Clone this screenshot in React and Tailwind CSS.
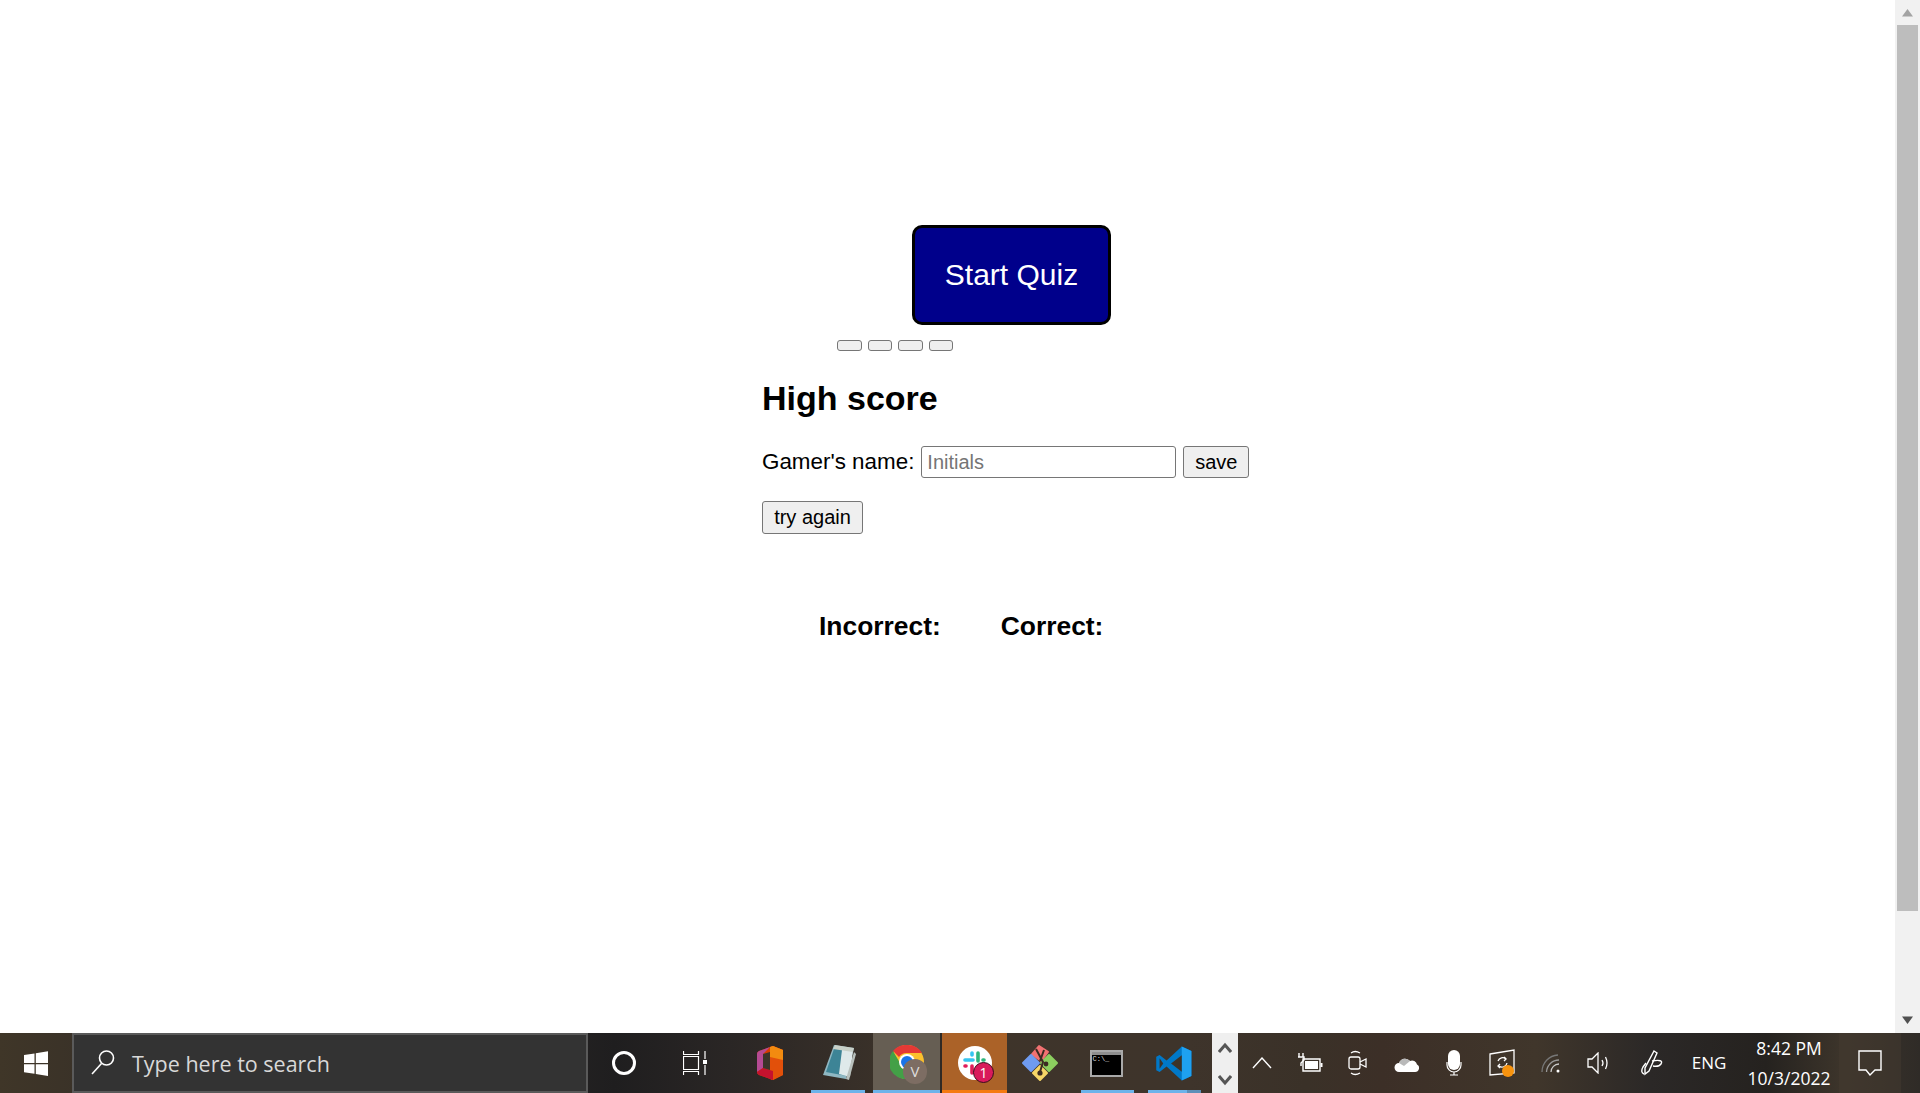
const Arrow = ({ up, c }) => (
  <svg width="25" height="25" viewBox="0 0 25 25" className="shrink-0">
    <path d={up ? "M7 16.5 12.5 9 18 16.5Z" : "M7 8.5 12.5 16 18 8.5Z"} fill={c} />
  </svg>
);

const Slot = ({ w, children, className = "" }) => (
  <div className={`relative flex h-full shrink-0 items-center justify-center ${className}`} style={{ width: w }}>
    {children}
  </div>
);

const Under = ({ color, cls }) => <div className={`absolute bottom-0 h-[3px] ${cls}`} style={{ background: color }} />;

const Win = () => (
  <svg width="24" height="25" viewBox="0 0 24 25" fill="#fff">
    <path d="M0 4 10.5 2.4V12H0ZM11.8 2.2 24 .3V12H11.8ZM0 13.2H10.5V22.8L0 21.2ZM11.8 13.2H24V25L11.8 23Z" />
  </svg>
);

const Office = () => (
  <svg width="28" height="34" viewBox="0 0 28 34">
    <path d="M1 8Q1 6 3 5L17 0 27 4V29L17 34 3 29Q1 28 1 26Z" fill="#d83b01" />
    <path d="M14 1 17 0 27 4V29L17 34 14 33Z" fill="#e2500a" />
    <path d="M14 1 17 0 27 4V14L14 11Z" fill="#f28b10" />
    <path d="M1 8Q1 6 3 5L14 1 7 8V22L1 26Z" fill="#b54a93" />
    <path d="M1 26 7 22 17 25V34L3 29Q1 28 1 26Z" fill="#c4122e" />
    <path d="M7 8 14 6V24L7 22Z" fill="#3d342a" />
  </svg>
);

const Notepad = () => (
  <svg width="34" height="38" viewBox="0 0 34 38">
    <path d="M12 1 32 4 24 35 1 31Z" fill="#8fb7c2" />
    <path d="M13 2 30 5 25 32 4 28Z" fill="#3d8496" />
    <path d="M20 6 31 6 28 33 17 30Z" fill="#dfe9ea" />
    <path d="M13 1 32 4 31 8 11 5Z" fill="#c8d0c8" />
    <path d="M32 8 34 10 27 36 24 35Z" fill="#b8c0bc" />
  </svg>
);

const Chrome = () => (
  <svg width="34" height="34" viewBox="2 2 34 34" className="-mt-[2px]">
    <circle cx="19" cy="19" r="17" fill="#fbc02d" />
    <path d="M19 2A17 17 0 0 1 34 10H19A9 9 0 0 0 11 14L5 8A17 17 0 0 1 19 2Z" fill="#e53935" />
    <path d="M5 8 12 20 20 36A17 17 0 0 1 5 8Z" fill="#43a047" />
    <circle cx="19" cy="19" r="8" fill="#fff" />
    <circle cx="19" cy="19" r="6" fill="#1a73e8" />
  </svg>
);

const Slack = () => (
  <svg width="34" height="34" viewBox="0 0 34 34">
    <circle cx="17" cy="17" r="17" fill="#fff" />
    <path d="M7 14H15" stroke="#36c5f0" strokeWidth="3.6" strokeLinecap="round" />
    <path d="M14 7V9" stroke="#36c5f0" strokeWidth="3.6" strokeLinecap="round" />
    <path d="M20 7V15" stroke="#2eb67d" strokeWidth="3.6" strokeLinecap="round" />
    <path d="M26 14H25" stroke="#2eb67d" strokeWidth="3.6" strokeLinecap="round" />
    <path d="M14 20V27" stroke="#e01e5a" strokeWidth="3.6" strokeLinecap="round" />
    <path d="M7 20H8" stroke="#e01e5a" strokeWidth="3.6" strokeLinecap="round" />
  </svg>
);

const GitIcon = () => (
  <svg width="38" height="38" viewBox="0 0 38 38" strokeLinejoin="round">
    <path d="M19 2 27 9 19 17 11 9Z" fill="#f27272" stroke="#f27272" strokeWidth="2" transform="rotate(-8 19 9)" />
    <path d="M10 11 18 19 10 27 2 19Z" fill="#6f9bf0" stroke="#6f9bf0" strokeWidth="2" />
    <path d="M28 11 36 19 28 27 20 19Z" fill="#8ccf5f" stroke="#8ccf5f" strokeWidth="2" />
    <path d="M19 22 26 29 19 36 12 29Z" fill="#f6d667" stroke="#f6d667" strokeWidth="2" />
    <path d="M15 5 22 18 19 28M23 6 19 17" stroke="#3b2b22" strokeWidth="2" fill="none" />
    <circle cx="19" cy="29" r="2.6" fill="#3b2b22" />
    <circle cx="25" cy="20" r="2.4" fill="#3b2b22" />
  </svg>
);

const Cmd = () => (
  <div className="h-[27px] w-[33px] border-2 border-[#a9a9a9] bg-black">
    <div className="h-[3px] bg-[#8e8e8e]" />
    <div className="pl-[1px] font-['Liberation_Mono',monospace] text-[7px] leading-[8px] text-[#ddd]">C:\_</div>
  </div>
);

const VSCode = () => (
  <svg width="38" height="37" viewBox="0 0 100 100">
    <path d="M71 4 97 16V84L71 96 30 58 11 73 2 68V32L11 27 30 42Z" fill="#0078c8" />
    <path d="M71 4 97 16V84L71 96Z" fill="#1ea1f1" />
    <path d="M71 28 42 50 71 72Z" fill="#3d3329" />
    <path d="M11 36 21 50 11 64Z" fill="#3d3329" />
  </svg>
);

const TrayIcon = ({ children, w }) => <Slot w={w}>{children}</Slot>;

export default function App() {
  const stroke = { stroke: "#fff", fill: "none", strokeWidth: 1.4 };
  return (
    <div className="flex h-[1093px] w-[1920px] flex-col overflow-hidden bg-white font-['Liberation_Sans',Arial,sans-serif] text-black">
      <div className="flex h-[1033px] shrink-0">
        <main className="w-[1895px] shrink-0">
          <div className="ml-[762px] w-[500px] pt-[225px]">
            <button className="ml-[150px] block h-[100px] w-[199px] rounded-[10px] border-[3px] border-black bg-[#00008b] pb-[2px] text-[30px] text-white">
              Start Quiz
            </button>
            <div className="ml-[75px] mt-[15px] flex gap-[6px]">
              {[0, 1, 2, 3].map((i) => (
                <button key={i} className="h-[11px] w-[24.5px] rounded-[3px] border border-[#767676] bg-[#efefef]" />
              ))}
            </div>
            <h2 className="mt-[29px] text-[34px] font-bold leading-[37px]">High score</h2>
            <div className="mt-[29px] flex h-[32px] items-center text-[22.4px]">
              <label className="-mt-[1px]">Gamer's name:</label>
              <input
                placeholder="Initials"
                className="ml-[7px] h-[32px] w-[255px] rounded-[3px] border border-[#767676] bg-white px-[5px] text-[20px] placeholder:text-[#757575]"
              />
              <button className="ml-[7px] h-[32px] w-[66px] rounded-[3px] border border-[#767676] bg-[#efefef] text-[20px]">save</button>
            </div>
            <button className="mt-[23px] block h-[33px] w-[101px] rounded-[3px] border border-[#767676] bg-[#efefef] pb-[2px] text-[20px]">try again</button>
            <div className="ml-[57px] mt-[77px] flex gap-[60px] text-[26.4px] font-bold leading-[30px]">
              <span>Incorrect:</span>
              <span>Correct:</span>
            </div>
          </div>
        </main>
        <aside className="flex w-[25px] shrink-0 flex-col items-center bg-[#f1f1f1]">
          <Arrow up c="#a3a3a3" />
          <div className="h-[886px] w-[21px] bg-[#bdbdbd]" />
          <div className="flex-1" />
          <Arrow c="#505050" />
        </aside>
      </div>

      <footer className="flex h-[60px] shrink-0 bg-[linear-gradient(90deg,#3f3628_0%,#3a3228_4%,#2a2726_25%,#1f1e1f_32%,#2a2625_38%,#3e342a_48%,#3e342b_62%,#3a3128_68%,#3c2f27_72%,#40362b_80%,#2b2827_86%,#25221f_92%,#3d352b_96%,#2f2b27_100%)] text-white">
        <Slot w={72}><Win /></Slot>
        <div className="flex h-full w-[516px] shrink-0 items-center border-2 border-[#5a5a5a] bg-[#333333] pl-[16px]">
          <svg width="28" height="28" viewBox="0 0 28 28" fill="none" stroke="#fff" strokeWidth="1.6" className="-mt-[2px]">
            <circle cx="16.5" cy="10" r="7" />
            <path d="M11.5 15.5 2 26" />
          </svg>
          <span className="ml-[14px] mt-[3px] font-['Open_Sans',sans-serif] text-[21.5px] text-[#d8d8d8]">Type here to search</span>
        </div>
        <Slot w={72}>
          <div className="h-[24px] w-[24px] rounded-full border-[3.5px] border-white" />
        </Slot>
        <Slot w={70}>
          <svg width="24" height="24" viewBox="0 0 24 24" fill="none" stroke="#fff" strokeWidth="1.2">
            <path d="M0.5 0V3.5H15.5V0M0.5 5.5H15.5V18.5H0.5ZM0.5 24V20.5H15.5V24" />
            <path d="M22 0V8M22 14V24" />
            <rect x="20" y="9" width="4" height="4" fill="#fff" stroke="none" />
          </svg>
        </Slot>
        <Slot w={5} />
        <Slot w={69}><Office /></Slot>
        <Slot w={69}><Notepad /><Under color="#6db3ea" cls="left-[7px] w-[54px]" /></Slot>
        <Slot w={67} className="bg-[#665e53]">
          <Chrome />
          <div className="absolute left-[30px] top-[26px] flex h-[25px] w-[24px] items-center justify-center rounded-full bg-[#7d6d63] font-['Open_Sans',sans-serif] text-[15px] text-[#ddd]">V</div>
          <Under color="#6db3ea" cls="left-0 w-full" />
        </Slot>
        <Slot w={67} className="border-l-2 border-[#2f2a25] bg-[#ab6228]">
          <Slack />
          <div className="absolute left-[31px] top-[29px] flex h-[21px] w-[21px] items-center justify-center rounded-full border border-[#3a0a1c] bg-[#d91a5b] font-['Open_Sans',sans-serif] text-[14px] text-white">1</div>
          <Under color="#f57a12" cls="left-0 w-full" />
        </Slot>
        <Slot w={66}><GitIcon /></Slot>
        <Slot w={66}><Cmd /><Under color="#6db3ea" cls="left-[8px] w-[53px]" /></Slot>
        <Slot w={2} />
        <Slot w={66}>
          <VSCode />
          <Under color="#6db3ea" cls="left-[7px] w-[39px]" />
          <Under color="#5d8fb8" cls="left-[46px] w-[14px]" />
        </Slot>
        <Slot w={5} />
        <div className="flex h-full w-[26px] shrink-0 flex-col items-center justify-between bg-[#efefef] pb-[7px] pt-[9px]">
          <svg width="14" height="12" viewBox="0 0 14 12" fill="none" stroke="#555" strokeWidth="3"><path d="M1 10 7 3 13 10" /></svg>
          <svg width="14" height="12" viewBox="0 0 14 12" fill="none" stroke="#555" strokeWidth="3"><path d="M1 2 7 9 13 2" /></svg>
        </div>
        <Slot w={48}>
          <svg width="20" height="12" viewBox="0 0 20 12" {...stroke}><path d="M1 11 10 1 19 11" /></svg>
        </Slot>
        <TrayIcon w={48}>
          <svg width="26" height="22" viewBox="0 0 26 22" fill="none" stroke="#fff" strokeWidth="1.4">
            <path d="M2 1V5M6 1V5M1 5H7V8L4 11V14" />
            <path d="M6 7H23V19H6Z" />
            <rect x="8" y="9" width="13" height="8" fill="#fff" stroke="none" />
            <rect x="23.5" y="11" width="2" height="4" fill="#fff" stroke="none" />
          </svg>
        </TrayIcon>
        <TrayIcon w={48}>
          <svg width="20" height="28" viewBox="0 0 20 28" fill="none" stroke="#fff" strokeWidth="1.3">
            <rect x="1" y="8" width="11" height="12" rx="2" />
            <path d="M12 13 18 10V18L12 15" />
            <path d="M3 4Q7 1 12 4M3 24Q7 27 12 24" />
          </svg>
        </TrayIcon>
        <TrayIcon w={48}>
          <svg width="26" height="20" viewBox="0 0 26 20">
            <path d="M6 19H22A4 4 0 0 0 24 11.5 5 5 0 0 0 17 8 6.5 6.5 0 0 0 6 10 4.5 4.5 0 0 0 6 19Z" fill="#fff" />
            <path d="M6 10A6.5 6.5 0 0 1 17 8L11 13Z" fill="#b9b9b9" />
          </svg>
        </TrayIcon>
        <TrayIcon w={47}>
          <svg width="16" height="26" viewBox="0 0 16 26" fill="none">
            <rect x="2" y="0" width="12" height="20" rx="6" fill="#fff" />
            <path d="M1 12V15A7 7 0 0 0 15 15V12M8 22V25M4 25H12" stroke="#fff" strokeWidth="1.2" />
          </svg>
        </TrayIcon>
        <TrayIcon w={49}>
          <div className="relative">
            <svg width="26" height="28" viewBox="0 0 26 28" fill="none" stroke="#fff" strokeWidth="1.3">
              <path d="M1 5 25 1V24L1 26Z" />
              <path d="M9 12A5 5 0 0 1 17 10M18 14A5 5 0 0 1 10 17" />
              <path d="M15 8 17 10 15 12M11 15 9 17 11 19" />
            </svg>
            <div className="absolute left-[13px] top-[16px] h-[12px] w-[12px] rounded-full bg-[#f7930e]" />
          </div>
        </TrayIcon>
        <TrayIcon w={49}>
          <svg width="20" height="20" viewBox="0 0 20 20" fill="none" strokeWidth="1.3">
            <path d="M1 19A17 17 0 0 1 17 2" stroke="#777" />
            <path d="M5.5 19A12.5 12.5 0 0 1 18 7" stroke="#999" />
            <path d="M10 19A8 8 0 0 1 18 11" stroke="#ccc" />
            <circle cx="17" cy="18" r="1.5" fill="#fff" />
          </svg>
        </TrayIcon>
        <TrayIcon w={47}>
          <svg width="24" height="22" viewBox="0 0 24 22" fill="none" stroke="#fff" strokeWidth="1.3">
            <path d="M1 7H5L11 1V21L5 15H1Z" />
            <path d="M15 8Q17 11 15 14M18.5 5Q21.5 11 18.5 17" />
          </svg>
        </TrayIcon>
        <Slot w={3} />
        <TrayIcon w={54}>
          <svg width="24" height="26" viewBox="0 0 24 26" fill="none" stroke="#fff" strokeWidth="1.4">
            <path d="M14 1 17 3 9 21 5 24 5 18Z" />
            <path d="M4 24Q0 22 3 17L6 13M12 11Q24 9 21 14 19 17 13 16" />
          </svg>
        </TrayIcon>
        <div className="flex h-full w-[60px] shrink-0 items-center justify-center font-['Open_Sans',sans-serif] text-[17px]">ENG</div>
        <div className="flex h-full w-[100px] shrink-0 flex-col items-center justify-center font-['Open_Sans',sans-serif] text-[17.5px]">
          <span className="leading-[30px]">8:42 PM</span>
          <span className="leading-[30px]">10/3/2022</span>
        </div>
        <div className="flex h-full w-[62px] shrink-0 items-center justify-center bg-[#443a2f]/50">
          <svg width="24" height="26" viewBox="0 0 24 26" fill="none" stroke="#fff" strokeWidth="1.4">
            <path d="M1 1H23V20H17L12 25 8 20H1Z" />
          </svg>
        </div>
      </footer>
    </div>
  );
}
